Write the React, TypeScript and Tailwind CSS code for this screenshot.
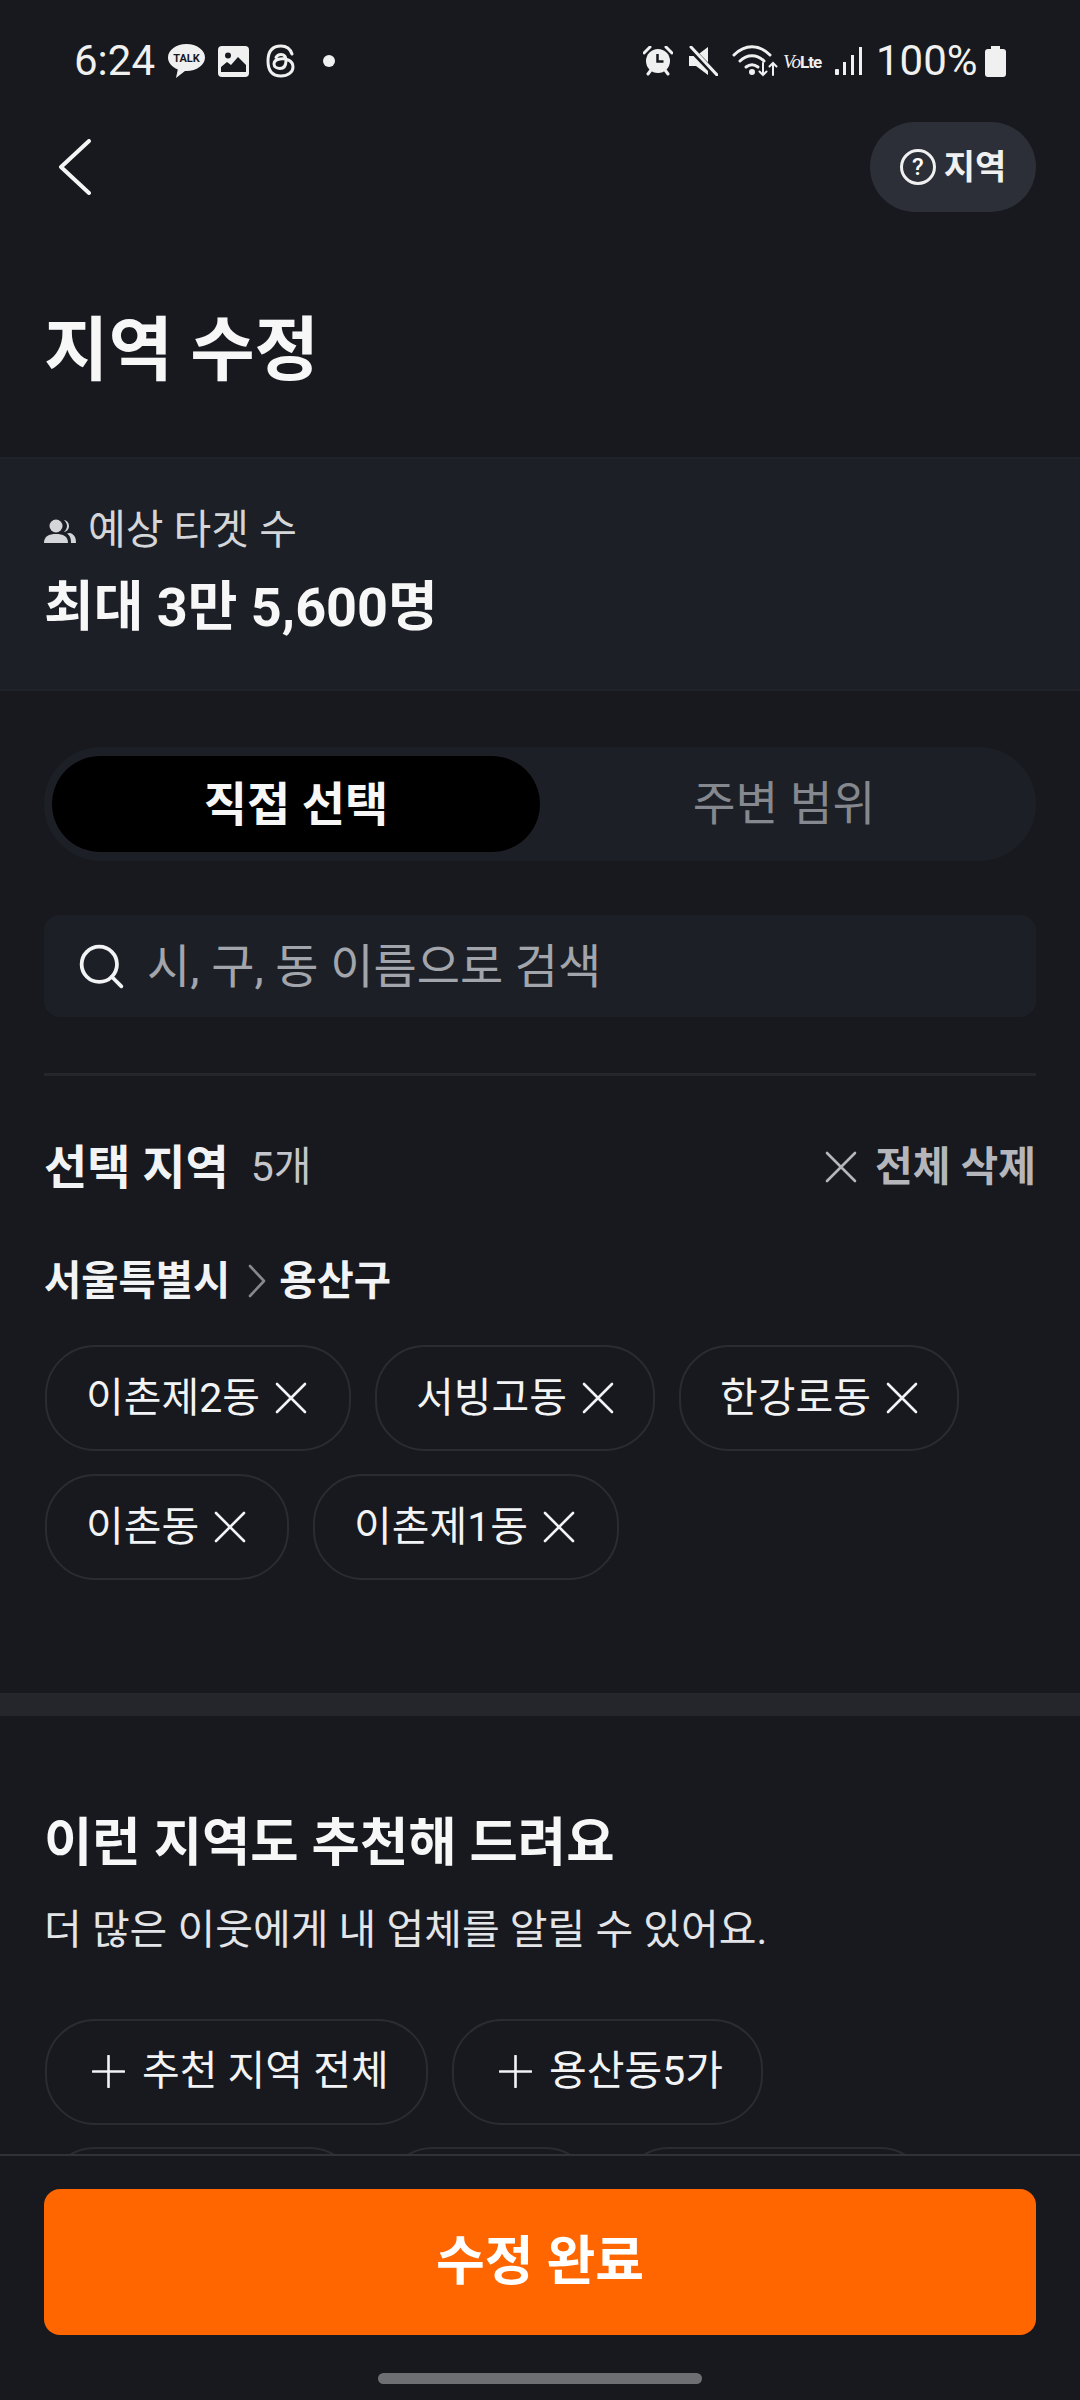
import { Search } from "lucide-react";

const selected = [
  { name: "이촌제2동", width: "w-[306px]" },
  { name: "서빙고동", width: "w-[280px]" },
  { name: "한강로동", width: "w-[280px]" },
  { name: "이촌동", width: "w-[244px]" },
  { name: "이촌제1동", width: "w-[306px]" },
];

function Cross({ className }: { className: string }) {
  return (
    <svg viewBox="0 0 32 32" fill="none" stroke="currentColor" strokeWidth="2.6" strokeLinecap="round" className={`h-[32px] w-[32px] shrink-0 ${className}`}>
      <path d="M2 2l28 28M30 2L2 30" />
    </svg>
  );
}

function StatusBar() {
  return (
    <div className="flex h-[122px] items-center justify-between pl-[74px] pr-[74px] text-[#f0f0f0]">
      <div className="flex items-center">
        <span className="w-[94px] text-[42px] leading-none">6:24</span>
        <svg viewBox="0 0 37 34" className="h-[34px] w-[37px]">
          <path d="M18.5 0C8.3 0 0 6 0 13.5c0 5.2 4 9.7 9.8 11.9L8 34l9-7h1.5C28.7 27 37 21 37 13.5S28.7 0 18.5 0z" fill="#f0f0f0" />
          <text x="18.5" y="18" textAnchor="middle" fontSize="11" fontWeight="700" fill="#17191e">TALK</text>
        </svg>
        <svg viewBox="0 0 31 31" className="ml-[13px] h-[31px] w-[31px]">
          <rect width="31" height="31" rx="4" fill="#f0f0f0" />
          <circle cx="10" cy="9.5" r="3" fill="#17191e" />
          <path d="M3 26v-5l6-5 4 3 7-8 8 8v7z" fill="#17191e" />
        </svg>
        <svg viewBox="0 0 31 34" fill="none" stroke="#f0f0f0" strokeWidth="3" className="ml-[16px] h-[34px] w-[31px]">
          <path d="M27 10C25 4 21 2 16 2 7 2 3 8 3 17s4 15 13 15c7 0 12-4 12-9 0-6-6-9-13-8-4 .5-6 2.5-6 5 0 3 3 4.500 6 4.500 4 0 6-3 6-8 0-4-2-6-5-6-2.500 0-4 1-5 3" strokeLinecap="round" />
        </svg>
        <span className="ml-[27px] h-[12px] w-[12px] rounded-full bg-[#f0f0f0]" />
      </div>
      <div className="flex items-center">
        <svg viewBox="0 0 30 30" className="h-[30px] w-[30px]">
          <path d="M1 7l6-6M29 7l-6-6M5 28l3-4M25 28l-3-4" stroke="#f0f0f0" strokeWidth="3" strokeLinecap="round" />
          <circle cx="15" cy="15" r="12" fill="#f0f0f0" />
          <path d="M14.500 8v7.500h6" fill="none" stroke="#17191e" strokeWidth="2.500" />
        </svg>
        <svg viewBox="0 0 30 30" className="ml-[15px] h-[30px] w-[30px]">
          <path d="M1 10h7l12-9v28L8 20H1z" fill="#f0f0f0" />
          <path d="M2 2l26 27" stroke="#17191e" strokeWidth="6" />
          <path d="M3 1l26 28" stroke="#f0f0f0" strokeWidth="3" strokeLinecap="round" />
        </svg>
        <svg viewBox="0 0 46 32" fill="none" stroke="#f0f0f0" strokeWidth="3" strokeLinecap="round" className="ml-[14px] h-[32px] w-[46px]">
          <path d="M2 10C13-1 27-1 38 10" />
          <path d="M8 16c7-7 17-7 24 0" />
          <path d="M14 22c4-3 8-3 12 0" />
          <circle cx="20" cy="27" r="1.500" fill="#f0f0f0" />
          <path d="M31 18v12m-3.500-3.500L31 30l3.500-3.500M41 30V18m-3.500 3.500L41 18l3.500 3.500" strokeWidth="2" />
        </svg>
        <span className="ml-[5px] flex w-[42px] items-baseline font-bold leading-none">
          <span className="font-['Liberation_Serif',serif] text-[19px] font-normal italic tracking-[-1px]">Vo</span>
          <span className="text-[17px] tracking-[-1px]">Lte</span>
        </span>
        <svg viewBox="0 0 27 28" fill="#f0f0f0" className="ml-[10px] h-[28px] w-[27px]">
          <rect x="0" y="22" width="4" height="6" rx="1" />
          <rect x="8" y="15" width="3" height="13" />
          <rect x="16" y="8" width="3" height="20" />
          <rect x="24" y="0" width="3" height="28" />
        </svg>
        <span className="ml-[14px] w-[103px] text-[42px] leading-none">100%</span>
        <svg viewBox="0 0 21 31" fill="#f0f0f0" className="ml-[6px] h-[31px] w-[21px]">
          <path d="M6 0h9v3h3a3 3 0 0 1 3 3v22a3 3 0 0 1-3 3H3a3 3 0 0 1-3-3V6a3 3 0 0 1 3-3h3z" />
        </svg>
      </div>
    </div>
  );
}

function Chip({ name, width }: { name: string; width: string }) {
  return (
    <div className={`flex h-[106px] items-center gap-[15px] rounded-[50px] border-2 border-[#2a2c32] pl-[39px] ${width}`}>
      <span className="text-[41px] leading-none text-[#f2f3f5]">{name}</span>
      <Cross className="text-[#f2f3f5]" />
    </div>
  );
}

function AddChip({ name, width }: { name: string; width: string }) {
  return (
    <div className={`flex h-[106px] items-center gap-[17px] rounded-[50px] border-2 border-[#2a2c32] pl-[45px] ${width}`}>
      <svg viewBox="0 0 33 33" fill="none" stroke="currentColor" strokeWidth="2.6" strokeLinecap="round" className="h-[33px] w-[33px] text-[#f2f3f5]">
        <path d="M16.5 1v31M1 16.5h31" />
      </svg>
      <span className="text-[41px] leading-none text-[#f2f3f5]">{name}</span>
    </div>
  );
}

export default function App() {
  return (
    <div className="flex h-[2400px] w-[1080px] flex-col overflow-hidden bg-[#17191e] font-[Roboto,'Noto_Sans_CJK_KR',sans-serif] text-white">
      <div className="min-h-0 flex-1 overflow-hidden">
        <StatusBar />

        {/* top nav */}
        <div className="flex h-[90px] items-center justify-between pl-[58px] pr-[44px]">
          <svg viewBox="0 0 34 56" fill="none" stroke="#f5f5f5" strokeWidth="4" strokeLinecap="round" strokeLinejoin="round" className="h-[56px] w-[34px]">
            <path d="M31 2L3 28l28 26" />
          </svg>
          <div className="flex h-[90px] w-[166px] items-center justify-center gap-[8px] rounded-[45px] bg-[#2c2f37]">
            <span className="flex h-[36px] w-[36px] items-center justify-center rounded-full border-[3px] border-[#f0f0f0] text-[24px] font-medium leading-none">?</span>
            <span className="text-[34px] font-bold leading-none text-[#f0f0f0]">지역</span>
          </div>
        </div>

        <h1 className="flex h-[245px] items-center pt-[32px] pl-[44px] text-[70px] font-bold leading-none text-[#f7f7f8]">지역 수정</h1>

        {/* expected reach */}
        <div className="flex h-[234px] flex-col justify-center border-y-2 border-[#20242a] bg-[#1c2026] pl-[44px]">
          <div className="-mt-[3px] flex items-center gap-[12px]">
            <svg viewBox="0 0 32 24" fill="#d4d6da" className="h-[26px] w-[32px]">
              <circle cx="12" cy="7" r="6.500" />
              <path d="M0 24c0-7 5-9 12-9s12 2 12 9z" />
              <path d="M20 1c3 .5 5 3 5 6s-2 5.500-5 6c2-2 3-4 3-6s-1-4-3-6zM26 14c4 1.500 6 4 6 10h-5c0-4-.5-7-4-9.500z" />
            </svg>
            <span className="text-[41px] leading-none text-[#d4d6da]">예상 타겟 수</span>
          </div>
          <div className="mt-[30px] text-[54px] font-bold leading-none text-[#f7f7f8]">최대 3만 5,600명</div>
        </div>

        <div className="px-[44px]">
          {/* mode switch */}
          <div className="mt-[56px] flex h-[114px] items-center rounded-[57px] bg-[#1c2026] p-[8px]">
            <div className="flex h-[96px] w-[488px] items-center justify-center rounded-[48px] bg-black text-[47px] font-bold leading-none text-[#f7f7f8]">직접 선택</div>
            <div className="flex-1 text-center text-[46.5px] leading-none text-[#85888e]">주변 범위</div>
          </div>

          {/* search */}
          <div className="mt-[54px] flex h-[102px] items-center gap-[19px] rounded-[16px] bg-[#1c2026] pl-[31px]">
            <Search size={53} strokeWidth={1.7} className="text-[#f2f3f5]" />
            <span className="text-[47px] leading-none text-[#a2a5ab]">시, 구, 동 이름으로 검색</span>
          </div>

          <div className="mt-[56px] h-[3px] bg-[#24262b]" />

          {/* selected regions */}
          <div className="mt-[66px] flex h-[50px] items-center justify-between">
            <div className="flex items-center gap-[22px]">
              <span className="text-[47px] font-bold leading-none text-[#f2f3f5]">선택 지역</span>
              <span className="text-[41px] leading-none text-[#c4c6cb]">5개</span>
            </div>
            <div className="flex items-center gap-[18px]">
              <Cross className="text-[#b4b6bc]" />
              <span className="text-[41px] font-bold leading-none text-[#b4b6bc]">전체 삭제</span>
            </div>
          </div>

          <div className="mt-[69px] flex h-[40px] items-center text-[40.5px] font-bold leading-none text-[#f2f3f5]">
            <span>서울특별시</span>
            <svg viewBox="0 0 18 34" fill="none" stroke="#85888e" strokeWidth="2.600" strokeLinecap="round" strokeLinejoin="round" className="ml-[18px] mr-[13px] h-[34px] w-[18px]">
              <path d="M2 2l14 15L2 32" />
            </svg>
            <span>용산구</span>
          </div>

          <div className="mt-[44px] flex flex-wrap gap-x-[24px] gap-y-[23px] pl-[1px]">
            {selected.map((s) => (
              <Chip key={s.name} name={s.name} width={s.width} />
            ))}
          </div>
        </div>

        <div className="mt-[113px] h-[23px] bg-[#24262b]" />

        {/* recommendations */}
        <div className="px-[44px]">
          <h2 className="mt-[101px] text-[52.5px] font-bold leading-none text-[#f7f7f8]">이런 지역도 추천해 드려요</h2>
          <p className="mt-[40px] text-[41px] leading-none text-[#e4e5e8]">더 많은 이웃에게 내 업체를 알릴 수 있어요.</p>
          <div className="mt-[68px] flex gap-[24px] pl-[1px]">
            <AddChip name="추천 지역 전체" width="w-[383px]" />
            <AddChip name="용산동5가" width="w-[311px]" />
          </div>
          <div className="mt-[22px] flex gap-[24px] pl-[1px]">
            <div className="h-[106px] w-[314px] rounded-[50px] border-2 border-[#2a2c32]" />
            <div className="h-[106px] w-[212px] rounded-[50px] border-2 border-[#2a2c32]" />
            <div className="h-[106px] w-[311px] rounded-[50px] border-2 border-[#2a2c32]" />
          </div>
        </div>
      </div>

      {/* bottom action */}
      <div className="h-[246px] shrink-0 border-t-2 border-[#303238] bg-[#17191e] px-[44px] pt-[33px]">
        <div className="flex h-[146px] items-center justify-center rounded-[16px] bg-[#ff6600] text-[53px] font-bold leading-none text-white">수정 완료</div>
        <div className="mx-auto mt-[38px] h-[11px] w-[324px] rounded-full bg-[#6e6f72]" />
      </div>
    </div>
  );
}
